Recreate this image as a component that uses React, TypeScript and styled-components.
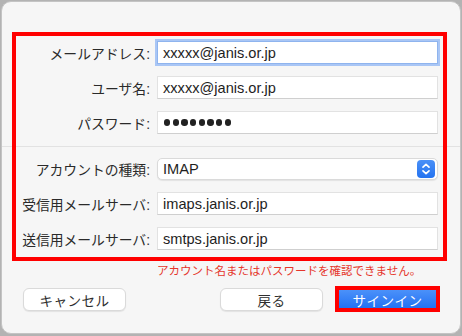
import React from "react";
import styled, { createGlobalStyle } from "styled-components";

const Global = createGlobalStyle`
  html, body { margin: 0; padding: 0; }
  body {
    background: #b3b3b3;
    width: 462px;
    height: 336px;
    overflow: hidden;
    font-family: "Liberation Sans", "Noto Sans CJK JP", sans-serif;
  }
`;

const Window = styled.div`
  position: relative;
  box-sizing: border-box;
  margin: 1px 0 0 1px;
  width: 460px;
  height: 333px;
  background: #f6f6f6;
  border: 1px solid #c4c4c4;
  border-radius: 10px;
  padding-top: 39px;
`;

const FormGrid = styled.div`
  display: grid;
  grid-template-columns: 148px 1fr;
  column-gap: 7px;
  row-gap: 12px;
  padding-right: 22px;
`;

const Label = styled.div`
  justify-self: end;
  align-self: center;
  font-size: 13.8px;
  color: #2a2a2a;
  white-space: nowrap;
`;

const Field = styled.div<{ $focus?: boolean }>`
  box-sizing: border-box;
  height: 23px;
  background: #ffffff;
  border: 1px solid ${(p) => (p.$focus ? "#8fb4ee" : "#e2e2e2")};
  border-bottom-color: ${(p) => (p.$focus ? "#8fb4ee" : "#cfcfcf")};
  box-shadow: ${(p) => (p.$focus ? "0 0 0 2px #a9c6f5" : "none")};
  display: flex;
  align-items: center;
  padding-left: 5px;
  font-size: 14.6px;
  color: #1e1e1e;
`;

const Dots = styled.div`
  display: flex;
  gap: 2.4px;
  padding-left: 1px;
`;

const Dot = styled.span`
  width: 6.3px;
  height: 6.3px;
  border-radius: 50%;
  background: #222;
`;

const Separator = styled.div`
  height: 1px;
  background: #e2e2e2;
  margin: 12px 0 11px;
`;

const Popup = styled.div`
  box-sizing: border-box;
  height: 22px;
  background: #ffffff;
  border: 1px solid #dadada;
  border-radius: 5px;
  box-shadow: 0 1px 1px rgba(0, 0, 0, 0.08);
  display: flex;
  align-items: center;
  justify-content: space-between;
  padding: 0 2px 0 5px;
  font-size: 14.6px;
  color: #1e1e1e;
`;

const Stepper = styled.div`
  width: 18px;
  height: 18px;
  border-radius: 4px;
  background: linear-gradient(#4a90f7, #2473f0);
  display: flex;
  align-items: center;
  justify-content: center;
`;

const ErrorText = styled.div`
  margin: 14px 0 0 155px;
  height: 14px;
  font-size: 11.5px;
  line-height: 14px;
  color: #e5362c;
  white-space: nowrap;
`;

const ButtonRow = styled.div`
  display: flex;
  align-items: center;
  margin-top: 10px;
  padding: 0 21px 0 21px;
`;

const Spacer = styled.div`
  flex: 1;
`;

const Button = styled.div<{ $primary?: boolean }>`
  box-sizing: border-box;
  width: 103px;
  height: 23px;
  border-radius: 6px;
  display: flex;
  align-items: center;
  justify-content: center;
  font-size: 13.6px;
  letter-spacing: 0.4px;
  color: ${(p) => (p.$primary ? "#ffffff" : "#2e2e2e")};
  background: ${(p) =>
    p.$primary ? "linear-gradient(#4d93fa, #1f6ef2)" : "#ffffff"};
  border: 1px solid ${(p) => (p.$primary ? "#2a74ee" : "#dadada")};
  box-shadow: 0 1px 1px rgba(0, 0, 0, 0.08);
`;

const ButtonGroup = styled.div`
  display: flex;
  gap: 13px;
`;

const Marked = styled.div`
  position: relative;
  &::after {
    content: "";
    position: absolute;
    left: -1px;
    right: -1px;
    top: -2px;
    bottom: -1px;
    border: 4px solid #ff0000;
    pointer-events: none;
  }
`;

const FormFrame = styled.div`
  position: absolute;
  left: 10px;
  top: 30px;
  width: 435px;
  height: 229px;
  box-sizing: border-box;
  border: 4px solid #ff0000;
  pointer-events: none;
`;

const Chevrons = () => (
  <svg width="10" height="14" viewBox="0 0 10 14" fill="none">
    <path
      d="M2 5.2 L5 2.4 L8 5.2"
      stroke="#fff"
      strokeWidth="1.7"
      strokeLinecap="round"
      strokeLinejoin="round"
    />
    <path
      d="M2 8.8 L5 11.6 L8 8.8"
      stroke="#fff"
      strokeWidth="1.7"
      strokeLinecap="round"
      strokeLinejoin="round"
    />
  </svg>
);

export default function App() {
  return (
    <>
      <Global />
      <Window>
        <FormGrid>
          <Label>メールアドレス:</Label>
          <Field $focus>xxxxx@janis.or.jp</Field>
          <Label>ユーザ名:</Label>
          <Field>xxxxx@janis.or.jp</Field>
          <Label>パスワード:</Label>
          <Field>
            <Dots>
              {Array.from({ length: 8 }).map((_, i) => (
                <Dot key={i} />
              ))}
            </Dots>
          </Field>
        </FormGrid>
        <Separator />
        <FormGrid>
          <Label>アカウントの種類:</Label>
          <Popup>
            IMAP
            <Stepper>
              <Chevrons />
            </Stepper>
          </Popup>
          <Label>受信用メールサーバ:</Label>
          <Field>imaps.janis.or.jp</Field>
          <Label>送信用メールサーバ:</Label>
          <Field>smtps.janis.or.jp</Field>
        </FormGrid>
        <ErrorText>アカウント名またはパスワードを確認できません。</ErrorText>
        <ButtonRow>
          <Button>キャンセル</Button>
          <Spacer />
          <ButtonGroup>
            <Button>戻る</Button>
            <Marked>
              <Button $primary>サインイン</Button>
            </Marked>
          </ButtonGroup>
        </ButtonRow>
        <FormFrame />
      </Window>
    </>
  );
}
